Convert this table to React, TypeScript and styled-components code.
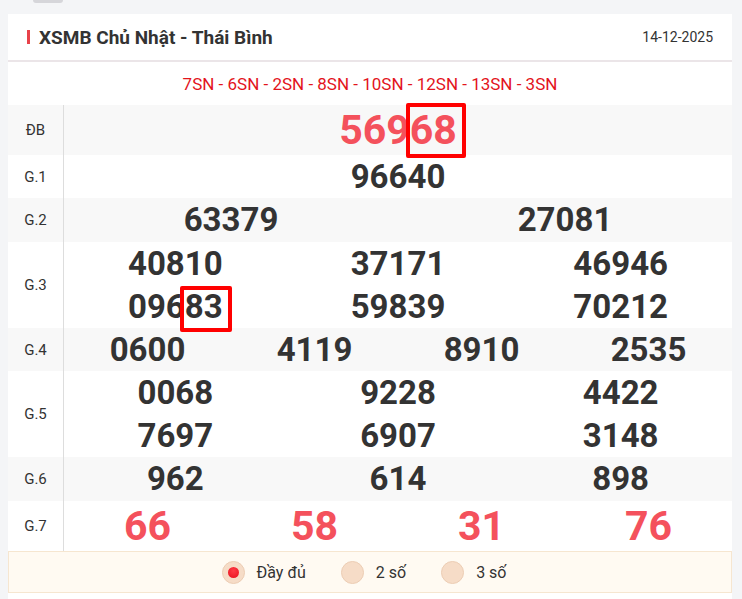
import React from "react";
import styled, { createGlobalStyle } from "styled-components";

const Global = createGlobalStyle`
  html, body { margin: 0; padding: 0; background: #f4f5f7; }
  body { font-family: Roboto, "Noto Sans", Arial, sans-serif; color: #333; }
  * { box-sizing: border-box; }
`;

const Page = styled.div`
  display: flex;
  flex-direction: column;
  padding: 0 10px 0 8px;
  min-height: 599px;
`;

const TopStrip = styled.div`
  height: 14px;
  display: flex;
  align-items: flex-start;
  padding-left: 25px;
`;

const Pill = styled.div`
  width: 30px;
  height: 3px;
  background: #d6d6da;
  border-radius: 0 0 12px 12px;
`;

const Card = styled.section`
  background: #fff;
  flex: 1;
  display: flex;
  flex-direction: column;
`;

const Header = styled.header`
  height: 48px;
  display: flex;
  align-items: center;
  justify-content: space-between;
  padding: 0 19px 0 19px;
  border-bottom: 2px solid #ebe5e8;
`;

const Title = styled.h2`
  margin: 0;
  display: flex;
  align-items: center;
  gap: 9px;
  font-size: 19px;
  font-weight: 700;
  color: #333;
  &::before {
    content: "";
    width: 3px;
    height: 14px;
    background: #e8424a;
  }
`;

const DateText = styled.span`
  font-size: 14px;
  color: #333;
`;

const Codes = styled.div`
  height: 43px;
  display: flex;
  align-items: center;
  justify-content: center;
  font-size: 17px;
  color: #e3141c;
`;

const Table = styled.div`
  display: flex;
  flex-direction: column;
`;

const Row = styled.div<{ $alt?: boolean }>`
  display: grid;
  grid-template-columns: 56px 1fr;
  background: ${(p) => (p.$alt ? "#f8f8f8" : "#fff")};
`;

const Label = styled.div`
  display: flex;
  align-items: center;
  justify-content: center;
  font-size: 15px;
  color: #333;
  border-right: 1px solid #dddddd;
`;

const Numbers = styled.div<{ $cols: number }>`
  display: grid;
  grid-template-columns: repeat(${(p) => p.$cols}, 1fr);
`;

const Num = styled.div<{ $big?: boolean; $red?: boolean; $h?: number }>`
  text-align: center;
  font-weight: 700;
  font-size: ${(p) => (p.$big ? "41px" : "33px")};
  line-height: ${(p) => p.$h ?? 43.5}px;
  color: ${(p) => (p.$red ? "#f4515c" : "#333")};
  white-space: nowrap;
`;

const Mark = styled.span<{ $t: number; $r: number; $b: number; $l: number }>`
  position: relative;
  &::after {
    content: "";
    position: absolute;
    left: ${(p) => p.$l}px;
    right: ${(p) => p.$r}px;
    top: ${(p) => p.$t}px;
    bottom: ${(p) => p.$b}px;
    border: 4px solid #ff0000;
    border-radius: 2px;
  }
`;

const Footer = styled.div`
  height: 42px;
  display: flex;
  align-items: center;
  justify-content: center;
  gap: 23px;
  background: #fffaf2;
  border: 1px solid #f6e6d0;
`;

const Option = styled.label`
  display: flex;
  align-items: center;
  gap: 12px;
  padding-right: 12px;
  font-size: 16px;
  color: #333;
`;

const Radio = styled.span<{ $on?: boolean }>`
  width: 23px;
  height: 23px;
  border-radius: 50%;
  background: #f6dcc7;
  border: 1px solid #eccdb4;
  display: flex;
  align-items: center;
  justify-content: center;
  &::after {
    content: "";
    display: ${(p) => (p.$on ? "block" : "none")};
    width: 11px;
    height: 11px;
    border-radius: 50%;
    background: radial-gradient(circle at 50% 35%, #ff3b45, #e8101e);
  }
`;

type Prize = {
  label: string;
  cols: number;
  nums: React.ReactNode[];
  big?: boolean;
  red?: boolean;
  h?: number;
};

const prizes: Prize[] = [
  {
    label: "ĐB",
    cols: 1,
    nums: [
      <>
        569
        <Mark $t={-3} $r={-9} $b={-4} $l={-4}>
          68
        </Mark>
      </>,
    ],
    big: true,
    red: true,
    h: 50,
  },
  { label: "G.1", cols: 1, nums: ["96640"], h: 43 },
  { label: "G.2", cols: 2, nums: ["63379", "27081"], h: 44 },
  {
    label: "G.3",
    cols: 3,
    nums: [
      "40810",
      "37171",
      "46946",
      <>
        096
        <Mark $t={-1} $r={-9} $b={-6} $l={-5}>
          83
        </Mark>
      </>,
      "59839",
      "70212",
    ],
    h: 43,
  },
  { label: "G.4", cols: 4, nums: ["0600", "4119", "8910", "2535"], h: 43 },
  { label: "G.5", cols: 3, nums: ["0068", "9228", "4422", "7697", "6907", "3148"], h: 43 },
  { label: "G.6", cols: 3, nums: ["962", "614", "898"], h: 44 },
  { label: "G.7", cols: 4, nums: ["66", "58", "31", "76"], big: true, red: true, h: 50 },
];

export default function App() {
  return (
    <>
      <Global />
      <Page>
        <TopStrip>
          <Pill />
        </TopStrip>
        <Card>
          <Header>
            <Title>XSMB Chủ Nhật - Thái Bình</Title>
            <DateText>14-12-2025</DateText>
          </Header>
          <Codes>7SN - 6SN - 2SN - 8SN - 10SN - 12SN - 13SN - 3SN</Codes>
          <Table>
            {prizes.map((p, i) => (
              <Row key={p.label} $alt={i % 2 === 0}>
                <Label>{p.label}</Label>
                <Numbers $cols={p.cols}>
                  {p.nums.map((n, j) => (
                    <Num key={j} $big={p.big} $red={p.red} $h={p.h}>
                      {n}
                    </Num>
                  ))}
                </Numbers>
              </Row>
            ))}
          </Table>
          <Footer>
            <Option>
              <Radio $on />
              Đầy đủ
            </Option>
            <Option>
              <Radio />
              2 số
            </Option>
            <Option>
              <Radio />
              3 số
            </Option>
          </Footer>
        </Card>
      </Page>
    </>
  );
}
